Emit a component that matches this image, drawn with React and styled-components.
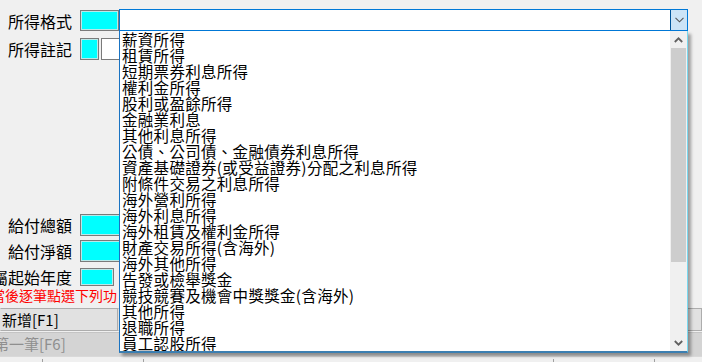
import React from "react";
import styled, { createGlobalStyle } from "styled-components";

const GlobalStyle = createGlobalStyle`
  html, body {
    margin: 0;
    padding: 0;
    background: #f0f0f0;
    overflow: hidden;
  }
  * {
    box-sizing: border-box;
  }
`;

const incomeTypes = [
  "薪資所得",
  "租賃所得",
  "短期票券利息所得",
  "權利金所得",
  "股利或盈餘所得",
  "金融業利息",
  "其他利息所得",
  "公債、公司債、金融債券利息所得",
  "資產基礎證券(或受益證券)分配之利息所得",
  "附條件交易之利息所得",
  "海外營利所得",
  "海外利息所得",
  "海外租賃及權利金所得",
  "財產交易所得(含海外)",
  "海外其他所得",
  "告發或檢舉獎金",
  "競技競賽及機會中獎獎金(含海外)",
  "其他所得",
  "退職所得",
  "員工認股所得",
];

const App = () => {
  return (
    <Page>
      <GlobalStyle />
      <Form>
        <Row $height={23}>
          <Label>所得格式</Label>
          <CodeBox $width={39} $height={21} />
          <Combo>
            <ComboField />
            <DropButton>
              <svg width="9" height="6" viewBox="0 0 9 6">
                <path d="M0.5 0.8 L4.5 4.8 L8.5 0.8" fill="none" stroke="#555" strokeWidth="1.1" />
              </svg>
            </DropButton>
            <ListBox>
              <Items>
                {incomeTypes.map((t) => (
                  <Item key={t}>{t}</Item>
                ))}
              </Items>
              <ScrollBar>
                <ScrollArrow>
                  <svg width="9" height="6" viewBox="0 0 9 6">
                    <path d="M0.8 5 L4.5 1.3 L8.2 5" fill="none" stroke="#606060" strokeWidth="1.8" />
                  </svg>
                </ScrollArrow>
                <Thumb />
                <Track />
                <ScrollArrow>
                  <svg width="9" height="6" viewBox="0 0 9 6">
                    <path d="M0.8 1 L4.5 4.7 L8.2 1" fill="none" stroke="#606060" strokeWidth="1.8" />
                  </svg>
                </ScrollArrow>
              </ScrollBar>
            </ListBox>
          </Combo>
        </Row>

        <Row $height={22} $top={6}>
          <Label>所得註記</Label>
          <CodeBox $width={19} $height={22} />
          <CodeBox $width={19} $height={22} $white $gap={2} />
        </Row>

        <Row $height={22} $top={154}>
          <Label>給付總額</Label>
          <CodeBox $width={60} $height={22} />
        </Row>

        <Row $height={22} $top={4}>
          <Label>給付淨額</Label>
          <CodeBox $width={60} $height={22} />
        </Row>

        <Row $height={21} $top={4}>
          <Label>屬起始年度</Label>
          <CodeBox $width={34} $height={18} />
        </Row>

        <Hint>當後逐筆點選下列功</Hint>
      </Form>

      <ButtonBar>
        <ToolButton $width={118}>新增[F1]</ToolButton>
        <ToolButton $width={120} />
        <ToolButton $width={120} />
        <ToolButton $width={120} />
        <ToolButton $width={120} />
        <ToolButton $width={104} />
      </ButtonBar>
      <NavBar>
        <NavButton>第一筆[F6]</NavButton>
      </NavBar>
      <StatusBar>
        <Tick $left={42} />
        <Tick $left={143} />
        <Tick $left={553} />
        <Tick $left={654} />
      </StatusBar>
    </Page>
  );
};

const Page = styled.div`
  position: relative;
  width: 702px;
  height: 362px;
  background: #f0f0f0;
  font-family: "Noto Sans CJK TC", "Noto Sans CJK SC", sans-serif;
  color: #000;
  display: flex;
  flex-direction: column;
`;

const Form = styled.div`
  padding-top: 9px;
  display: flex;
  flex-direction: column;
`;

const Row = styled.div`
  display: flex;
  align-items: center;
  height: ${(p) => p.$height}px;
  margin-top: ${(p) => p.$top || 0}px;
`;

const Label = styled.div`
  width: 72px;
  margin-right: 8px;
  display: flex;
  justify-content: flex-end;
  white-space: nowrap;
  font-size: 16px;
  line-height: 18px;
`;

const CodeBox = styled.div`
  width: ${(p) => p.$width}px;
  height: ${(p) => p.$height}px;
  margin-left: ${(p) => p.$gap || 0}px;
  background: ${(p) => (p.$white ? "#ffffff" : "#00ffff")};
  border: 1px solid #7a7a7a;
  box-shadow: inset 0 0 0 1px ${(p) => (p.$white ? "#ffffff" : "#b9e9e9")};
  flex-shrink: 0;
`;

const Combo = styled.div`
  position: absolute;
  left: 119px;
  top: 9px;
  width: 569px;
  height: 23px;
  background: #fff;
  border: 1px solid #0078d7;
  border-bottom-width: 2px;
  display: flex;
  z-index: 5;
`;

const ComboField = styled.div`
  flex: 1;
`;

const DropButton = styled.div`
  width: 17px;
  height: 100%;
  background: #cce4f7;
  border-left: 1px solid #005499;
  display: flex;
  align-items: center;
  justify-content: center;
`;

const ListBox = styled.div`
  position: absolute;
  left: -1px;
  right: -1px;
  top: 21px;
  height: 322px;
  background: #fff;
  border-left: 1px solid #1a73c2;
  border-right: 1px solid #79d8ef;
  border-bottom: 2px solid #3c7fb1;
  box-shadow: 3px 3px 3px rgba(0, 0, 0, 0.35);
  display: flex;
`;

const Items = styled.ul`
  flex: 1;
  list-style: none;
  margin: 0;
  padding: 0 0 0 2px;
  overflow: hidden;
`;

const Item = styled.li`
  height: 16px;
  font-size: 15.5px;
  line-height: 16px;
  white-space: nowrap;
  letter-spacing: 0.3px;
`;

const ScrollBar = styled.div`
  width: 17px;
  background: #f0f0f0;
  display: flex;
  flex-direction: column;
`;

const ScrollArrow = styled.div`
  height: 17px;
  display: flex;
  align-items: center;
  justify-content: center;
  flex-shrink: 0;
`;

const Thumb = styled.div`
  height: 214px;
  margin: 0 1px;
  background: #cdcdcd;
  flex-shrink: 0;
`;

const Track = styled.div`
  flex: 1;
`;

const Hint = styled.div`
  margin-top: 0px;
  margin-left: -9px;
  font-size: 14px;
  line-height: 16px;
  height: 17px;
  color: #ff0000;
  white-space: nowrap;
`;

const ButtonBar = styled.div`
  margin-top: 4px;
  height: 23px;
  display: flex;
`;

const ToolButton = styled.div`
  width: ${(p) => p.$width}px;
  flex-shrink: 0;
  height: 23px;
  background: #e1e1e1;
  border: 1px solid #adadad;
  border-left-color: #e1e1e1;
  font-size: 15px;
  line-height: 21px;
  padding-left: 1px;
  white-space: nowrap;
`;

const NavBar = styled.div`
  margin-top: 1px;
  height: 24px;
  background: #d4d4d4;
  border-top: 1px solid #c4c4c4;
  display: flex;
`;

const NavButton = styled.div`
  width: 118px;
  font-size: 15px;
  line-height: 22px;
  color: #8f8f8f;
  white-space: nowrap;
  margin-left: -6px;
`;

const StatusBar = styled.div`
  position: relative;
  flex: 1;
  background: #f0f0f0;
  border-top: 1px solid #d9d9d9;
`;

const Tick = styled.div`
  position: absolute;
  left: ${(p) => p.$left}px;
  top: 2px;
  width: 1px;
  height: 3px;
  background: #a0a0a0;
`;

export default App;
